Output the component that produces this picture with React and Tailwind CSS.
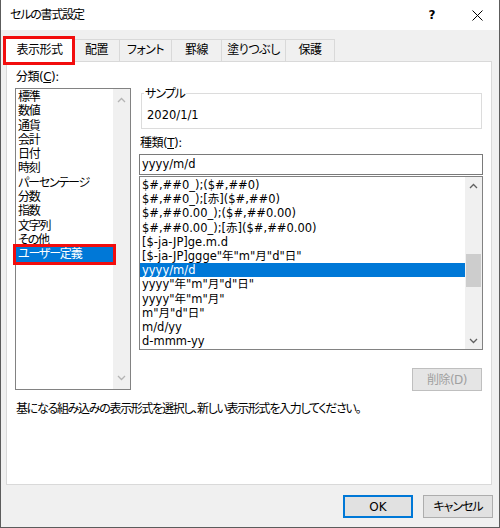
import React from 'react';

const categories = ['標準', '数値', '通貨', '会計', '日付', '時刻', 'パーセンテージ', '分数', '指数', '文字列', 'その他', 'ユーザー定義'];

const formats = [
  '$#,##0_);($#,##0)',
  '$#,##0_);[赤]($#,##0)',
  '$#,##0.00_);($#,##0.00)',
  '$#,##0.00_);[赤]($#,##0.00)',
  '[$-ja-JP]ge.m.d',
  '[$-ja-JP]ggge"年"m"月"d"日"',
  'yyyy/m/d',
  'yyyy"年"m"月"d"日"',
  'yyyy"年"m"月"',
  'm"月"d"日"',
  'm/d/yy',
  'd-mmm-yy',
];

const tabs = [
  { label: '配置', w: 'w-[47px]' },
  { label: 'フォント', w: 'w-[53px]' },
  { label: '罫線', w: 'w-[51px]' },
  { label: '塗りつぶし', w: 'w-[65px]' },
  { label: '保護', w: 'w-[50px]' },
];

const Chevron = ({ up, color }) => (
  <svg width="9" height="6" viewBox="0 0 9 6">
    <polyline
      points={up ? '1,5 4.5,1.5 8,5' : '1,1 4.5,4.5 8,1'}
      fill="none"
      stroke={color}
      strokeWidth="1.3"
    />
  </svg>
);

const App = () => {
  return (
    <div className="w-[500px] h-[528px] bg-[#f0f0f0] border-x border-b border-[#5c5c5c] flex flex-col text-[12px] text-black [font-family:'DejaVu_Sans','Noto_Sans_CJK_JP',sans-serif] [font-feature-settings:'palt']">
      {/* title bar */}
      <div className="h-[30px] bg-white flex items-center shrink-0">
        <div className="pl-[9px] flex-1 tracking-[-1.2px]">セルの書式設定</div>
        <div className="w-[46px] flex justify-center font-bold text-[12px]">?</div>
        <div className="w-[44px] flex justify-center">
          <svg width="11" height="11" viewBox="0 0 11 11">
            <line x1="0.5" y1="0.5" x2="10.5" y2="10.5" stroke="#000" strokeWidth="1" />
            <line x1="10.5" y1="0.5" x2="0.5" y2="10.5" stroke="#000" strokeWidth="1" />
          </svg>
        </div>
      </div>

      {/* tabs */}
      <div className="h-[31px] flex items-end pl-[4px] relative z-10 shrink-0 tracking-[-0.5px]">
        <div className="relative w-[69px] h-[25px] -mb-px bg-white border-x border-t border-[#d9d9d9] flex items-center justify-center">
          表示形式
          <div className="absolute -left-[3px] -top-[2px] -right-[2px] -bottom-[3px] border-[3px] border-[#f20d0d]" />
        </div>
        {tabs.map((t) => (
          <div
            key={t.label}
            className={`${t.w} h-[22px] -ml-px border-x border-t border-[#d9d9d9] flex items-center justify-center pb-[1px]`}
          >
            {t.label}
          </div>
        ))}
      </div>

      {/* panel */}
      <div className="ml-[5px] w-[486px] h-[424px] bg-white border border-[#d9d9d9] shrink-0">
        <div className="flex items-start">
          {/* category column */}
          <div className="ml-[8px] mt-[7px]">
            <div className="h-[16px] leading-[16px] pl-[1px] tracking-[-0.5px]">
              分類(<span className="underline">C</span>):
            </div>
            <div className="mt-[3px] w-[116px] h-[302px] border border-[#828282] flex">
              <div className="flex-1 pt-[1px] tracking-[-1.2px]">
                {categories.map((c, i) =>
                  i === categories.length - 1 ? (
                    <div key={c} className="relative h-[14.3px] leading-[14.3px] pl-[2px] bg-[#0078d7] text-white">
                      {c}
                      <div className="absolute -left-[3px] -right-[3px] -top-[3px] -bottom-[3px] border-[3px] border-[#f20d0d]" />
                    </div>
                  ) : (
                    <div key={c} className="h-[14.3px] leading-[14.3px] pl-[2px]">
                      {c}
                    </div>
                  )
                )}
              </div>
              <div className="w-[17px] bg-[#f0f0f0] flex flex-col items-center justify-between py-[8px]">
                <Chevron up color="#b4b4b4" />
                <Chevron color="#b4b4b4" />
              </div>
            </div>
          </div>

          {/* type column */}
          <div className="ml-[8px] w-[344px]">
            <div className="relative ml-[2px] mt-[31px] w-[341px] h-[36px] border border-[#dcdcdc] pl-[5px] pt-[13px] leading-[16px] text-[11.5px]">
              <div className="absolute left-[2px] -top-[8px] px-[1px] bg-white leading-[16px] text-[12px] tracking-[-1px]">サンプル</div>
              2020/1/1
            </div>
            <div className="mt-[6px] h-[16px] leading-[16px] pl-[1px] tracking-[-0.5px]">
              種類(<span className="underline">T</span>):
            </div>
            <div className="mt-[3px] h-[21px] border border-[#7a7a7a] pl-[2px] leading-[19px] text-[11.5px]">yyyy/m/d</div>
            <div className="mt-[1px] h-[174px] border border-[#828282] flex overflow-hidden">
              <div className="flex-1 pt-[1px] overflow-hidden text-[11.5px]">
                {formats.map((f) => (
                  <div
                    key={f}
                    className={`h-[14.2px] leading-[14.2px] pl-[2px] whitespace-nowrap ${
                      f === 'yyyy/m/d' ? 'bg-[#0078d7] text-white' : ''
                    }`}
                  >
                    {f}
                  </div>
                ))}
              </div>
              <div className="w-[17px] bg-[#f0f0f0] flex flex-col items-center">
                <div className="h-[17px] flex items-center justify-center">
                  <Chevron up color="#606060" />
                </div>
                <div className="mt-[60px] w-[15px] h-[33px] bg-[#cdcdcd]" />
                <div className="flex-1" />
                <div className="h-[17px] flex items-center justify-center">
                  <Chevron color="#606060" />
                </div>
              </div>
            </div>
            <div className="flex justify-end mt-[18px] pr-[1px]">
              <div className="w-[70px] h-[23px] bg-[#e5e5e5] border border-[#bfbfbf] text-[#a0a0a0] flex items-center justify-center tracking-[-0.5px]">
                削除(D)
              </div>
            </div>
          </div>
        </div>
        <div className="mt-[10px] pl-[9px] leading-[16px] tracking-[-1.3px]">
          基になる組み込みの表示形式を選択し、新しい表示形式を入力してください。
        </div>
      </div>

      {/* buttons */}
      <div className="mt-[10px] flex justify-end gap-[10px] pr-[6px]">
        <div className="w-[70px] h-[23px] bg-[#e1e1e1] border-2 border-[#0078d7] flex items-center justify-center">
          OK
        </div>
        <div className="w-[70px] h-[23px] bg-[#e1e1e1] border border-[#adadad] flex items-center justify-center tracking-[-1px]">
          キャンセル
        </div>
      </div>
    </div>
  );
};

export default App;
